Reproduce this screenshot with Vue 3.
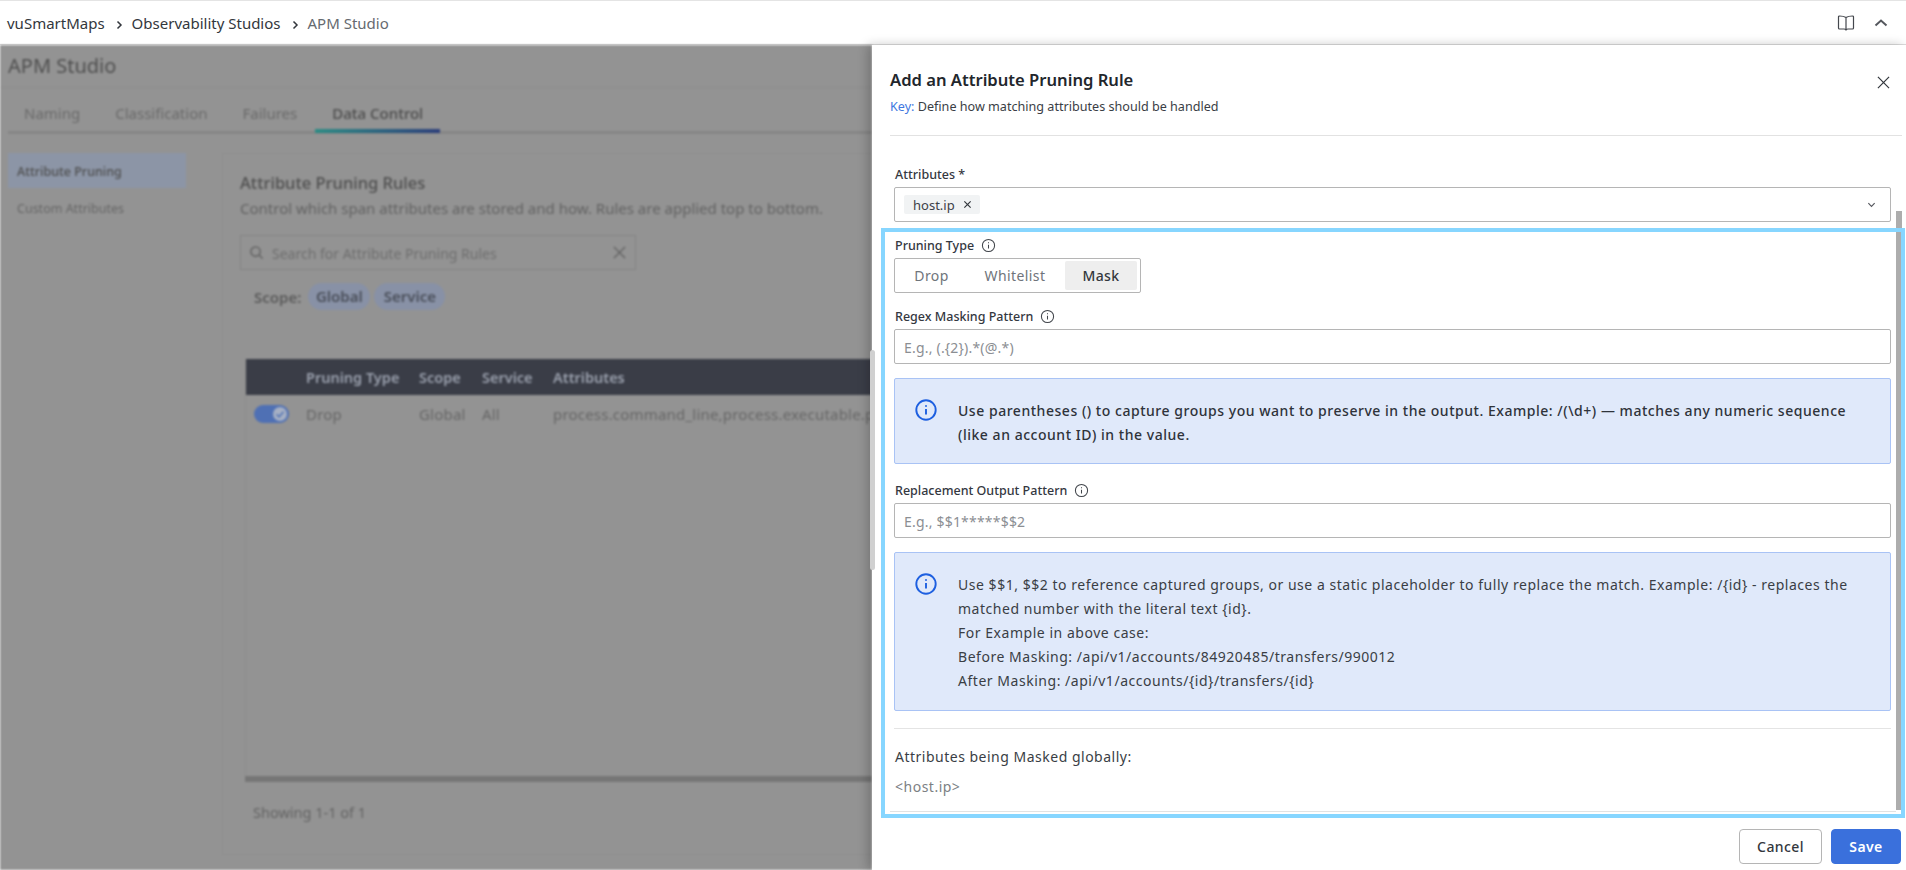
<script setup>
const tabs = ['Naming', 'Classification', 'Failures', 'Data Control']
const columns = [
  { label: 'Pruning Type', value: 'Drop', width: '113px' },
  { label: 'Scope', value: 'Global', width: '63px' },
  { label: 'Service', value: 'All', width: '71px' },
  { label: 'Attributes', value: 'process.command_line,process.executable.path,process.pid', width: '520px' }
]
const pruningTypes = ['Drop', 'Whitelist', 'Mask']
</script>

<template>
  <div class="app">
    <header class="topbar">
      <nav class="crumbs">
        <span>vuSmartMaps</span>
        <svg class="crumb-arrow" viewBox="0 0 10 12"><path d="M3.500 2.500 7 6l-3.500 3.500" /></svg>
        <span>Observability Studios</span>
        <svg class="crumb-arrow" viewBox="0 0 10 12"><path d="M3.500 2.500 7 6l-3.500 3.500" /></svg>
        <span class="crumb-current">APM Studio</span>
      </nav>
      <div class="top-icons">
        <svg class="book" viewBox="0 0 18 18">
          <path d="M9 3.6C7.6 2.6 5 2 2.6 2 1.8 2 1.5 2.4 1.5 3v11c0 .6.4 1 1 1H7c.9 0 1.6.4 2 1 .4-.6 1.1-1 2-1h4.500c.6 0 1-.4 1-1V3c0-.6-.3-1-1.100-1C13 2 10.400 2.600 9 3.600ZM9 3.600V16" />
        </svg>
        <svg class="chev-up" viewBox="0 0 14 10"><path d="M1.500 7.500 7 2.500l5.500 5" /></svg>
      </div>
    </header>

    <main class="stage">
      <section class="page">
        <h1 class="page-title">APM Studio</h1>
        <div class="tabs">
          <span v-for="tab in tabs" :key="tab" class="tab" :class="{ active: tab === 'Data Control' }">{{ tab }}</span>
        </div>
        <div class="page-body">
          <aside class="side">
            <div class="side-item current">Attribute Pruning</div>
            <div class="side-item">Custom Attributes</div>
          </aside>
          <div class="card">
            <h2>Attribute Pruning Rules</h2>
            <p class="card-sub">Control which span attributes are stored and how. Rules are applied top to bottom.</p>
            <div class="search">
              <svg viewBox="0 0 16 16"><circle cx="7" cy="7" r="5" /><path d="m11 11 3.500 3.500" /></svg>
              <span>Search for Attribute Pruning Rules</span>
              <svg viewBox="0 0 16 16"><path d="m2 2 12 12M14 2 2 14" /></svg>
            </div>
            <div class="scope">
              <b>Scope:</b>
              <span class="pill">Global</span>
              <span class="pill">Service</span>
            </div>
            <div class="table">
              <div class="t-head">
                <span v-for="col in columns" :key="col.label" :style="{ width: col.width }">{{ col.label }}</span>
              </div>
              <div class="t-row">
                <span class="switch">
                  <i><svg viewBox="0 0 12 12"><path d="m3 6.200 2.200 2.200L9 4" /></svg></i>
                </span>
                <span v-for="col in columns" :key="col.label" :style="{ width: col.width }">{{ col.value }}</span>
              </div>
            </div>
            <div class="t-scroll"></div>
            <div class="showing">Showing 1-1 of 1</div>
          </div>
        </div>
      </section>
      <div class="page-scrollbar"></div>

      <section class="drawer">
        <div class="drawer-head">
          <div>
            <h3>Add an Attribute Pruning Rule</h3>
            <p><span class="key">Key:</span> Define how matching attributes should be handled</p>
          </div>
          <svg class="close" viewBox="0 0 14 14"><path d="m1 1 12 12M13 1 1 13" /></svg>
        </div>

        <div class="drawer-body">
          <label class="label">Attributes *</label>
          <div class="select">
            <span class="chip">host.ip
              <svg viewBox="0 0 10 10"><path d="m1.500 1.500 7 7M8.500 1.500l-7 7" /></svg>
            </span>
            <svg class="select-arrow" viewBox="0 0 10 6"><path d="m1.500 1 3.500 3.500L8.500 1" /></svg>
          </div>

          <label class="label with-info">Pruning Type
            <svg class="mini-info" viewBox="0 0 16 16"><circle cx="8" cy="8" r="6.500" /><path d="M8 7.200v4M8 4.500v1.200" /></svg>
          </label>
          <div class="segments">
            <span v-for="item in pruningTypes" :key="item" class="segment" :class="{ on: item === 'Mask' }">{{ item }}</span>
          </div>

          <label class="label with-info">Regex Masking Pattern
            <svg class="mini-info" viewBox="0 0 16 16"><circle cx="8" cy="8" r="6.500" /><path d="M8 7.200v4M8 4.500v1.200" /></svg>
          </label>
          <input class="input" placeholder="E.g., (.{2}).*(@.*)" />

          <div class="notice bold">
            <svg class="notice-icon" viewBox="0 0 22 22"><circle cx="11" cy="11" r="9.700" /><path d="M11 10v5.500" /><path d="M11 6.200v1.600" /></svg>
            <div>Use parentheses () to capture groups you want to preserve in the output. Example: /(\d+) — matches any numeric sequence (like an account ID) in the value.</div>
          </div>

          <label class="label with-info">Replacement Output Pattern
            <svg class="mini-info" viewBox="0 0 16 16"><circle cx="8" cy="8" r="6.500" /><path d="M8 7.200v4M8 4.500v1.200" /></svg>
          </label>
          <input class="input" placeholder="E.g., $$1*****$$2" />

          <div class="notice tall">
            <svg class="notice-icon" viewBox="0 0 22 22"><circle cx="11" cy="11" r="9.700" /><path d="M11 10v5.500" /><path d="M11 6.200v1.600" /></svg>
            <div>
              <div>Use $$1, $$2 to reference captured groups, or use a static placeholder to fully replace the match. Example: /{id} - replaces the matched number with the literal text {id}.</div>
              <div>For Example in above case:</div>
              <div>Before Masking: /api/v1/accounts/84920485/transfers/990012</div>
              <div>After Masking: /api/v1/accounts/{id}/transfers/{id}</div>
            </div>
          </div>

          <div class="summary">
            <div class="summary-title">Attributes being Masked globally:</div>
            <div class="summary-value">&lt;host.ip&gt;</div>
          </div>
          <div class="summary-end"></div>
          <div class="drawer-scrollbar"></div>
        </div>

        <footer class="drawer-foot">
          <button class="btn">Cancel</button>
          <button class="btn primary">Save</button>
        </footer>
      </section>
      <div class="highlight"></div>
    </main>
  </div>
</template>

<style>
body {
  margin: 0;
  overflow: hidden;
}
</style>

<style scoped>
.app {
  width: 1906px;
  height: 870px;
  display: flex;
  flex-direction: column;
  overflow: hidden;
  font-family: "Noto Sans", "Open Sans", sans-serif;
  color: #2d3139;
  background: #fff;
}
.topbar {
  height: 45px;
  box-sizing: border-box;
  flex: none;
  display: flex;
  align-items: center;
  justify-content: space-between;
  padding: 0 18px 0 7px;
  background: #fff;
  border-top: 1px solid #e4e4e4;
  border-bottom: 1px solid #dedede;
}
.crumbs {
  display: flex;
  align-items: center;
  font-size: 15px;
  color: #33373d;
}
.crumb-arrow {
  width: 10px;
  height: 12px;
  margin: 4px 8px 0 9px;
  fill: none;
  stroke: #33373d;
  stroke-width: 1.500;
}
.crumb-current {
  color: #666a70;
}
.top-icons {
  display: flex;
  align-items: center;
  gap: 19px;
}
.book {
  width: 18px;
  height: 18px;
  fill: none;
  stroke: #44474d;
  stroke-width: 1.200;
}
.chev-up {
  width: 14px;
  height: 10px;
  fill: none;
  stroke: #55585e;
  stroke-width: 2;
}
.stage {
  flex: 1;
  display: flex;
  position: relative;
  min-height: 0;
}
.page {
  width: 872px;
  flex: none;
  overflow: hidden;
  background: #939393;
  color: #5b5b5b;
  filter: blur(0.8px);
  box-sizing: border-box;
  padding-left: 8px;
}
.page-title {
  margin: 0 0 0 -8px;
  padding-left: 8px;
  height: 43px;
  line-height: 42px;
  box-sizing: border-box;
  font-size: 20px;
  font-weight: 400;
  color: #4f4f4f;
  border-bottom: 1px solid #8c8c8c;
}
.tabs {
  display: flex;
  height: 46px;
  align-items: center;
  gap: 35px;
  border-bottom: 3px solid #868686;
  box-sizing: border-box;
  padding: 6px 0 0 16px;
  font-size: 15px;
}
.tab {
  position: relative;
  color: #6a6a6a;
}
.tab.active {
  color: #4c4c4c;
  font-weight: 500;
}
.tab.active::after {
  content: "";
  position: absolute;
  left: -17px;
  right: -17px;
  bottom: -10px;
  height: 4px;
  background: linear-gradient(90deg, #2b8c85, #2c3e7b);
}
.page-body {
  display: flex;
  padding-top: 19px;
}
.side {
  width: 214px;
  flex: none;
}
.side-item {
  width: 178px;
  height: 34px;
  line-height: 34px;
  box-sizing: border-box;
  padding-left: 9px;
  font-size: 12.500px;
  color: #666;
  margin-bottom: 4px;
}
.side-item.current {
  height: 35px;
  line-height: 38px;
  background: #8c95a6;
  color: #4d4d4d;
  font-weight: 500;
}
.card {
  flex: none;
  width: 800px;
  height: 702px;
  box-sizing: border-box;
  border: 1px solid #8e8e8e;
  padding: 18px 0 0 17px;
}
.card h2 {
  margin: 0;
  font-size: 16.500px;
  line-height: 22px;
  font-weight: 500;
  color: #4f4f4f;
}
.card-sub {
  margin: 4px 0 0;
  font-size: 15px;
  line-height: 20px;
  white-space: nowrap;
  color: #626262;
}
.search {
  display: flex;
  align-items: center;
  width: 396px;
  height: 35px;
  margin-top: 17px;
  box-sizing: border-box;
  border: 1px solid #858585;
  padding: 0 8px 0 8px;
  font-size: 14px;
  color: #6e6e6e;
}
.search span {
  flex: 1;
  padding: 2px 0 0 8px;
}
.search svg {
  width: 15px;
  height: 15px;
  fill: none;
  stroke: #5c5c5c;
  stroke-width: 1.400;
}
.scope {
  display: flex;
  align-items: center;
  gap: 4px;
  margin-top: 13px;
  margin-left: 5px;
  height: 27px;
  font-size: 15px;
}
.scope b {
  font-weight: 600;
  margin: 0 3px 0 9px;
}
.pill {
  height: 27px;
  line-height: 27px;
  width: 62px;
  text-align: center;
  border-radius: 14px;
  background: #8891a6;
  font-weight: 600;
  color: #4a4f5a;
}
.pill:last-child {
  width: 71px;
}
.table {
  margin-top: 49px;
  margin-left: 5px;
  height: 417px;
  border-left: 1px solid #8c8c8c;
}
.t-head {
  height: 36px;
  display: flex;
  align-items: center;
  background: #3a3d47;
  color: #9ba1ae;
  font-size: 14.500px;
  font-weight: 600;
  padding-left: 60px;
}
.t-head span,
.t-row span {
  flex: none;
  white-space: nowrap;
}
.t-row {
  height: 38px;
  display: flex;
  align-items: center;
  padding-left: 8px;
  font-size: 15px;
  letter-spacing: 0.2px;
  color: #666;
}
.t-row .switch {
  width: 35px;
  height: 18px;
  margin-right: 17px;
  border-radius: 9px;
  background: #4f70b4;
  position: relative;
}
.switch i {
  position: absolute;
  right: 2px;
  top: 2px;
  width: 14px;
  height: 14px;
  border-radius: 50%;
  background: #a6b0c4;
}
.switch svg {
  display: block;
  width: 14px;
  height: 14px;
  fill: none;
  stroke: #5575b5;
  stroke-width: 1.300;
}
.t-scroll {
  height: 6px;
  margin-left: 5px;
  background: #767676;
}
.showing {
  margin: 21px 0 0 13px;
  font-size: 14.500px;
  line-height: 18px;
  color: #636363;
}
.page-scrollbar {
  position: absolute;
  left: 870px;
  top: 305px;
  width: 5px;
  height: 220px;
  border-radius: 3px;
  background: #d0d0d0;
  z-index: 2;
}
.drawer {
  flex: 1;
  min-width: 0;
  display: flex;
  flex-direction: column;
  background: #fff;
  box-shadow: -4px 0 10px rgba(0, 0, 0, 0.22);
  position: relative;
  z-index: 1;
}
.drawer-head {
  height: 91px;
  flex: none;
  box-sizing: border-box;
  margin: 0 4px 0 18px;
  padding-top: 24px;
  display: flex;
  justify-content: space-between;
  border-bottom: 1px solid #e2e2e2;
}
.drawer-head h3 {
  margin: 0;
  font-size: 16.600px;
  line-height: 22px;
  font-weight: 600;
  color: #22262c;
}
.drawer-head p {
  margin: 8px 0 0;
  font-size: 12.600px;
  line-height: 16px;
  color: #3a3e45;
}
.key {
  color: #3f78df;
}
.close {
  width: 13px;
  height: 13px;
  margin: 7px 12px 0 0;
  fill: none;
  stroke: #33373d;
  stroke-width: 1.300;
}
.drawer-body {
  flex: 1;
  min-height: 0;
  position: relative;
  box-sizing: border-box;
  padding: 30px 15px 0 22px;
}
.label {
  display: flex;
  align-items: center;
  height: 16px;
  margin-bottom: 5px;
  padding-left: 1px;
  font-size: 12.500px;
  font-weight: 500;
  color: #34383f;
}
.with-info {
  gap: 7px;
}
.mini-info {
  width: 15px;
  height: 15px;
  fill: none;
  stroke: #41454b;
  stroke-width: 1.100;
}
.select {
  height: 35px;
  box-sizing: border-box;
  display: flex;
  align-items: center;
  justify-content: space-between;
  padding: 0 14px 0 9px;
  border: 1px solid #b5b5b5;
  border-radius: 2px;
  margin-bottom: 15px;
}
.chip {
  display: flex;
  align-items: center;
  gap: 8px;
  height: 19px;
  padding: 0 8px 0 9px;
  border-radius: 2px;
  background: #f1f3f4;
  font-size: 13px;
  color: #3d4148;
}
.chip svg {
  width: 9px;
  height: 9px;
  fill: none;
  stroke: #33373d;
  stroke-width: 1.300;
}
.select-arrow {
  width: 9px;
  height: 6px;
  fill: none;
  stroke: #55585e;
  stroke-width: 1.300;
}
.segments {
  width: 247px;
  height: 35px;
  box-sizing: border-box;
  display: flex;
  align-items: center;
  padding: 0 3px;
  border: 1px solid #b5b5b5;
  border-radius: 2px;
  margin-bottom: 15px;
}
.segment {
  height: 29px;
  line-height: 29px;
  text-align: center;
  font-size: 14px;
  letter-spacing: 0.4px;
  color: #6f747b;
}
.segment:nth-child(1) {
  width: 67px;
}
.segment:nth-child(2) {
  width: 100px;
}
.segment:nth-child(3) {
  width: 72px;
}
.segment.on {
  background: #eeeeee;
  border-radius: 2px;
  color: #33373d;
  font-weight: 500;
}
.input {
  display: block;
  width: 100%;
  height: 35px;
  box-sizing: border-box;
  padding: 1px 9px 0;
  margin: 0 0 14px;
  border: 1px solid #b5b5b5;
  border-radius: 2px;
  outline: none;
  font-family: inherit;
  font-size: 14px;
  letter-spacing: 0.2px;
}
.input::placeholder {
  color: #8b8e93;
  opacity: 1;
}
.notice {
  display: flex;
  box-sizing: border-box;
  height: 86px;
  padding: 20px 30px 0 20px;
  gap: 21px;
  border: 1px solid #a9c3f5;
  border-radius: 2px;
  background: #e0e9fa;
  font-size: 14px;
  letter-spacing: 0.53px;
  line-height: 24px;
  color: #3a3e45;
  margin-bottom: 18px;
}
.notice.bold {
  font-weight: 500;
  color: #2f333a;
}
.notice.tall {
  height: 159px;
  margin-bottom: 17px;
}
.notice-icon {
  width: 22px;
  height: 22px;
  flex: none;
  fill: none;
  stroke: #1d5fe0;
  stroke-width: 1.900;
}
.summary {
  border-top: 1px solid #e4e4e4;
  height: 83px;
  box-sizing: border-box;
  padding: 18px 0 0 1px;
  font-size: 14px;
  letter-spacing: 0.5px;
}
.summary-end {
  height: 1px;
  margin: 0 -5px 0 -4px;
  background: #e2e2e2;
}
.summary-title {
  line-height: 20px;
  color: #3a3e45;
}
.summary-value {
  margin-top: 10px;
  line-height: 20px;
  color: #7c7f84;
}
.drawer-scrollbar {
  position: absolute;
  right: 4px;
  top: 75px;
  width: 6px;
  height: 599px;
  background: #adadad;
}
.drawer-foot {
  height: 50px;
  flex: none;
  box-sizing: border-box;
  display: flex;
  justify-content: flex-end;
  gap: 9px;
  padding: 9px 5px 0 0;
}
.btn {
  height: 35px;
  width: 83px;
  border: 1px solid #b5b5b5;
  border-radius: 4px;
  background: #fff;
  font-family: inherit;
  font-size: 14px;
  letter-spacing: 0.4px;
  font-weight: 500;
  color: #33373d;
}
.btn.primary {
  width: 70px;
  border-color: #3a70dc;
  background: #3a70dc;
  color: #fff;
  font-weight: 600;
}
.highlight {
  position: absolute;
  left: 881px;
  top: 183px;
  width: 1024px;
  height: 590px;
  box-sizing: border-box;
  border: 4px solid #87d6ff;
  pointer-events: none;
  z-index: 3;
}
</style>
